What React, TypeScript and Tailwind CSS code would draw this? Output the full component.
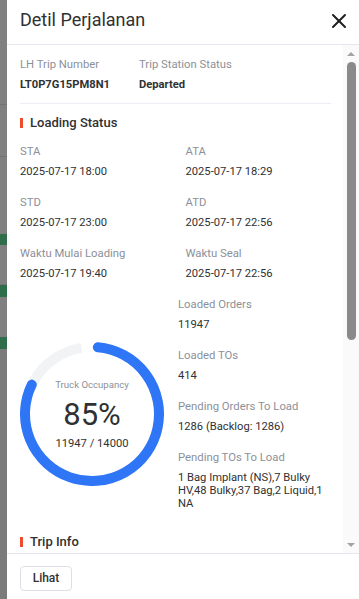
import { X } from 'lucide-react'
import React from 'react'

type Field = { label: string; value: string }

const loadingTimes: Field[] = [
    { label: 'STA', value: '2025-07-17 18:00' },
    { label: 'ATA', value: '2025-07-17 18:29' },
    { label: 'STD', value: '2025-07-17 23:00' },
    { label: 'ATD', value: '2025-07-17 22:56' },
    { label: 'Waktu Mulai Loading', value: '2025-07-17 19:40' },
    { label: 'Waktu Seal', value: '2025-07-17 22:56' },
]

const loadCounts: Field[] = [
    { label: 'Loaded Orders', value: '11947' },
    { label: 'Loaded TOs', value: '414' },
    { label: 'Pending Orders To Load', value: '1286 (Backlog: 1286)' },
    { label: 'Pending TOs To Load', value: '1 Bag Implant (NS),7 Bulky HV,48 Bulky,37 Bag,2 Liquid,1 NA' },
]

function InfoItem({ label, value, bold }: Field & { bold?: boolean }) {
    return (
        <div className="mb-[17px]">
            <p className="text-[11.3px] leading-4 text-[#8c9099]">{label}</p>
            <p className={`mt-[5px] text-[11.2px] leading-[13px] text-[#303133] ${bold ? 'font-bold' : ''}`}>{value}</p>
        </div>
    )
}

function SectionTitle({ children }: { children: React.ReactNode }) {
    return (
        <div className="flex items-center gap-[7px]">
            <span className="h-[10px] w-[3px] bg-[#ee4d2d]" />
            <h3 className="text-[13px] leading-5 font-medium text-[#303133]">{children}</h3>
        </div>
    )
}

function OccupancyRing() {
    return (
        <div className="relative mt-[45px] h-[144px] w-[144px] shrink-0">
            <svg width="144" height="144" viewBox="0 0 144 144">
                <path d="M 9.04 49.09 A 67 67 0 0 1 61.52 5.83" fill="none" stroke="#f2f3f5" strokeWidth="10" />
                <path
                    d="M 77.84 5.26 A 67 67 0 1 1 11.78 42.63"
                    fill="none"
                    stroke="#2f76f6"
                    strokeWidth="10"
                    strokeLinecap="round"
                />
            </svg>
            <div className="absolute inset-0 flex flex-col items-center justify-center pt-[2px]">
                <span className="text-[9.6px] leading-3 text-[#8c9099]">Truck Occupancy</span>
                <span className="mt-[7px] text-[31px] leading-[34px] text-[#303133]">85%</span>
                <span className="mt-[4px] text-[11.2px] leading-4 text-[#303133]">11947 / 14000</span>
            </div>
        </div>
    )
}

function Backdrop() {
    return (
        <div className="flex w-[7px] shrink-0 flex-col bg-[#808080]">
            <div className="h-[105px] border-b border-[#747474]" />
            <div className="h-[52px] border-b border-[#747474]" />
            <div className="h-[77px]" />
            <div className="h-[11px] bg-[#2f6d4b]" />
            <div className="h-[40px] border-b border-[#747474]" />
            <div className="h-[12px] bg-[#2f6d4b]" />
            <div className="h-[40px]" />
            <div className="h-[12px] bg-[#2f6d4b]" />
            <div className="flex-1 bg-[#7b7b7c]" />
        </div>
    )
}

export default function App() {
    return (
        <div className="flex h-[599px] w-[359px] overflow-hidden font-[Roboto,'Noto_Sans',sans-serif]">
            <Backdrop />
            <div className="flex min-w-0 flex-1 flex-col bg-white">
                <div className="flex h-[45px] shrink-0 items-start justify-between border-b border-[#e4e7ed] pt-[8px] pl-[13px] pr-[8px]">
                    <h2 className="text-[18px] leading-6 text-[#303133]">Detil Perjalanan</h2>
                    <X size={24} strokeWidth={2} className="mt-[1px] text-[#1f1f1f]" />
                </div>

                <div className="flex min-h-0 flex-1">
                    <div className="min-w-0 flex-1 overflow-hidden pt-[12px] pl-[13px] pr-[12px]">
                        <div className="grid grid-cols-[119px_1fr]">
                            <InfoItem label="LH Trip Number" value="LT0P7G15PM8N1" bold />
                            <InfoItem label="Trip Station Status" value="Departed" bold />
                        </div>
                        <div className="-mt-[5px] border-t border-[#ebeef5]" />

                        <div className="mt-[9px] mb-[11px]">
                            <SectionTitle>Loading Status</SectionTitle>
                        </div>
                        <div className="grid grid-cols-2 gap-x-5">
                            {loadingTimes.map((f) => (
                                <InfoItem key={f.label} {...f} />
                            ))}
                        </div>

                        <div className="flex items-start gap-[14px]">
                            <OccupancyRing />
                            <div className="min-w-0 flex-1">
                                {loadCounts.map((f) => (
                                    <InfoItem key={f.label} {...f} />
                                ))}
                            </div>
                        </div>

                        <div className="mt-[5px]">
                            <SectionTitle>Trip Info</SectionTitle>
                        </div>
                    </div>

                    <div className="flex w-[16px] shrink-0 flex-col items-center bg-[#fafafa] pt-[7px] pb-[6px]">
                        <span className="h-0 w-0 border-x-[4px] border-b-[4px] border-x-transparent border-b-[#a3a3a3]" />
                        <span className="mt-[6px] h-[278px] w-[9px] rounded-full bg-[#8a8a8a]" />
                        <span className="flex-1" />
                        <span className="h-0 w-0 border-x-[4px] border-t-[4px] border-x-transparent border-t-[#a3a3a3]" />
                    </div>
                </div>

                <div className="h-[46px] shrink-0 border-t border-[#e4e7ed] pt-[11px] pl-[13px]">
                    <button className="h-[25px] w-[52px] rounded-[4px] border border-[#dcdfe6] bg-white text-[12px] font-medium text-[#303133]">
                        Lihat
                    </button>
                </div>
            </div>
        </div>
    )
}
